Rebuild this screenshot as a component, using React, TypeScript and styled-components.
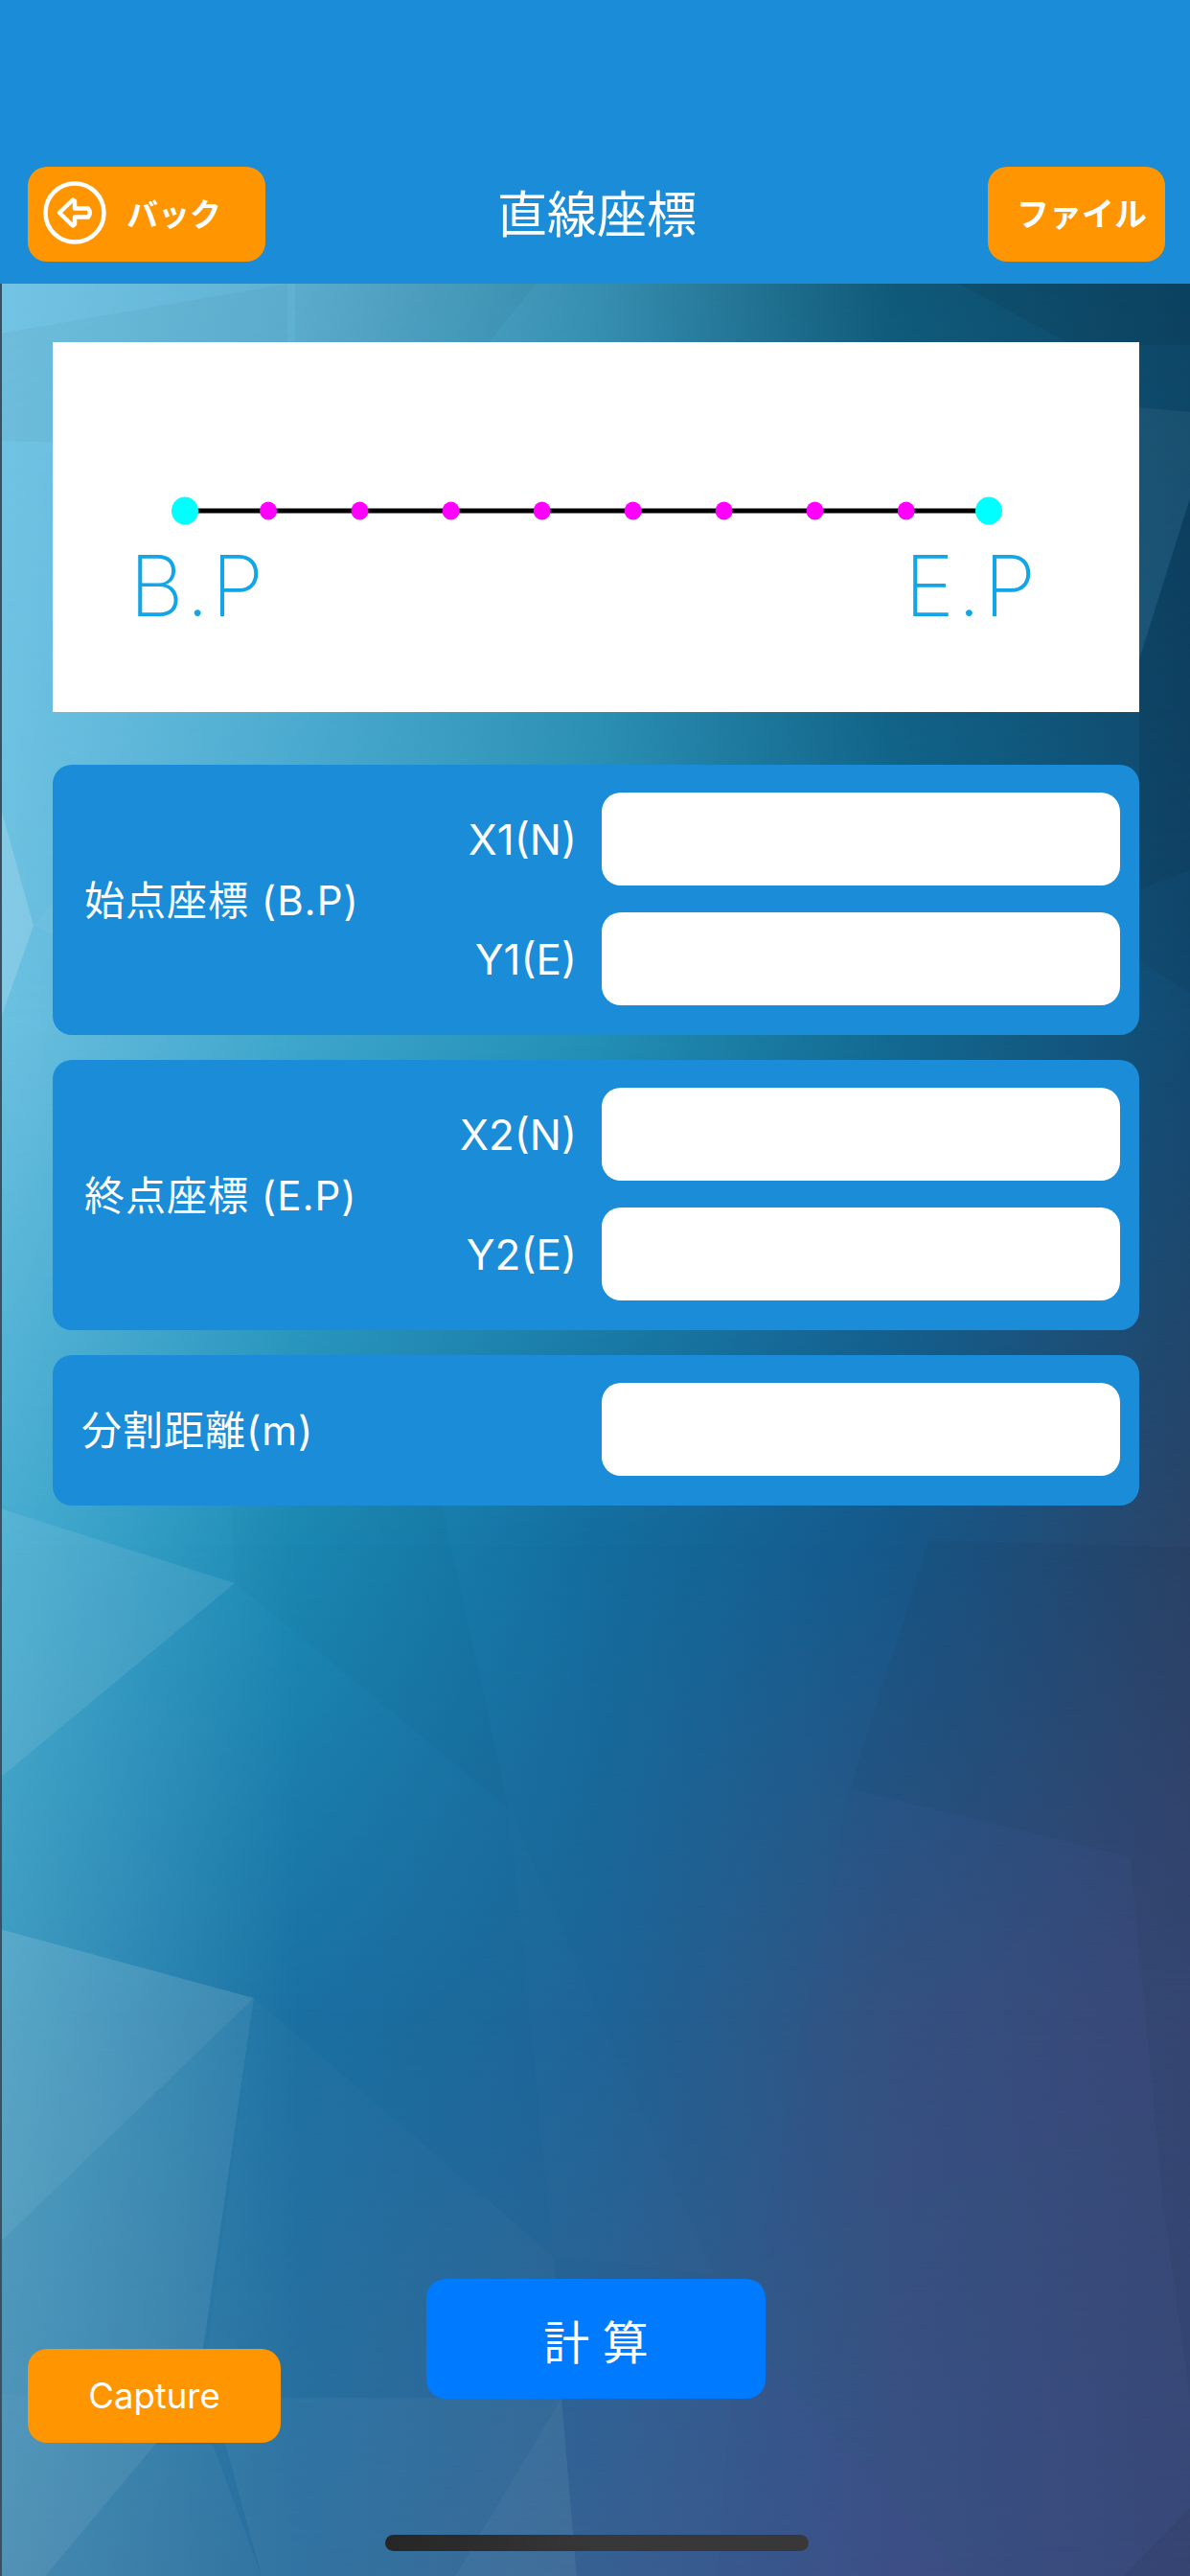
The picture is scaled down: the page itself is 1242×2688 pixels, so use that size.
import React from 'react'
import styled, { createGlobalStyle } from 'styled-components'

const GlobalStyle = createGlobalStyle`
  html, body {
    margin: 0;
    padding: 0;
    background: #1a8cd8;
  }
  * {
    box-sizing: border-box;
  }
`

const FONT = `Inter, 'Noto Sans CJK JP', sans-serif`

const Screen = styled.div`
  position: relative;
  width: 1242px;
  height: 2688px;
  overflow: hidden;
  display: flex;
  flex-direction: column;
  font-family: ${FONT};
  color: #fff;
  &::after {
    content: '';
    position: absolute;
    inset: 0 auto 0 0;
    width: 2px;
    background: #3c4f5e;
  }
`

const Backdrop = styled.svg`
  position: absolute;
  top: 0;
  left: 0;
  z-index: 0;
`

const Header = styled.header`
  position: relative;
  z-index: 1;
  height: 296px;
  flex: none;
  background: #1a8cd8;
  padding: 174px 26px 0 29px;
  display: grid;
  grid-template-columns: 248px 1fr 185px;
  grid-template-rows: 99px;
  align-items: center;
`

const BackButton = styled.button`
  height: 99px;
  border: 0;
  border-radius: 20px;
  background: #ff9500;
  color: #fff;
  font: 700 33px ${FONT};
  display: flex;
  align-items: center;
  gap: 21px;
  padding: 0 0 4px 16px;
`

const FileButton = styled.button`
  height: 99px;
  border: 0;
  border-radius: 20px;
  background: #ff9500;
  color: #fff;
  font: 700 34px ${FONT};
  padding: 0 0 4px 30px;
  text-align: left;
  white-space: nowrap;
`

const Title = styled.h1`
  margin: 0 0 6px 242px;
  font: 400 52px ${FONT};
  white-space: nowrap;
`

const Content = styled.main`
  position: relative;
  z-index: 1;
  flex: 1;
  display: flex;
  flex-direction: column;
  padding: 61px 53px 0 55px;
`

const DiagramCard = styled.div`
  height: 386px;
  background: #fff;
  margin-bottom: 55px;
  svg {
    display: block;
  }
`

const Panels = styled.div`
  display: flex;
  flex-direction: column;
  gap: 26px;
`

const Panel = styled.section<{ $inset: number }>`
  background: #1a8cd8;
  border-radius: 20px;
  padding: 29px 20px 31px ${(p) => p.$inset}px;
  display: flex;
  align-items: center;
`

const PanelTitle = styled.div`
  flex: 1;
  font-size: 42px;
  letter-spacing: 1px;
  white-space: nowrap;
  margin-bottom: 4px;
`

const Fields = styled.div`
  display: flex;
  flex-direction: column;
  gap: 28px;
`

const FieldRow = styled.label`
  display: flex;
  align-items: center;
  justify-content: flex-end;
  gap: 26px;
`

const FieldLabel = styled.span`
  font-size: 44px;
  white-space: nowrap;
`

const FieldInput = styled.input`
  width: 541px;
  height: 97px;
  border: 0;
  border-radius: 20px;
  background: #fff;
  outline: none;
`

const Footer = styled.footer`
  position: relative;
  z-index: 1;
  display: flex;
  flex-direction: column;
  padding-bottom: 26px;
`

const Actions = styled.div`
  display: flex;
  align-items: flex-start;
  gap: 152px;
  padding-left: 29px;
  height: 171px;
`

const CaptureButton = styled.button`
  width: 264px;
  height: 98px;
  margin-top: 73px;
  border: 0;
  border-radius: 20px;
  background: #ff9500;
  color: #fff;
  font: 400 36.5px ${FONT};
`

const CalcButton = styled.button`
  width: 354px;
  height: 125px;
  border: 0;
  border-radius: 20px;
  background: #007aff;
  color: #fff;
  font: 400 48px ${FONT};
`

const HomeBar = styled.div`
  width: 442px;
  height: 17px;
  margin: 96px 0 0 402px;
  border-radius: 9px;
  background: linear-gradient(90deg, #262626 0%, #2e2e2e 25%, #383838 50%, #383838 100%);
`

type Shade = { points: string; fill: string; opacity: number }

const ROWS: { y: number; stops: string[] }[] = [
  { y: 0, stops: ['#76c6e6', '#6cb6d6', '#3f8fae', '#0f5370', '#0b4562'] },
  { y: 0.4, stops: ['#6cc0e0', '#3ea6cc', '#2390b6', '#126a92', '#124a72'] },
  { y: 0.6, stops: ['#46acd0', '#1b8ab5', '#136d9e', '#15588a', '#2b4468'] },
  { y: 0.78, stops: ['#3f9abf', '#1a70a2', '#1d6497', '#33527f', '#384876'] },
  { y: 1, stops: ['#3f86ae', '#276c9c', '#336090', '#3a5084', '#384878'] }
]

const SHADES: Shade[] = [
  // upper field
  { points: '0,348 300,296 300,468 0,460', fill: '#000', opacity: 0.03 },
  { points: '308,296 560,296 394,500 308,420', fill: '#000', opacity: 0.03 },
  { points: '0,840 35,966 0,1065', fill: '#fff', opacity: 0.16 },
  { points: '35,966 170,798 335,798 272,1081', fill: '#fff', opacity: 0.04 },
  { points: '1189,425 1242,430 1242,520 1189,687', fill: '#fff', opacity: 0.05 },
  { points: '1000,296 1242,296 1242,360 1120,360', fill: '#000', opacity: 0.06 },
  { points: '1189,690 1242,520 1242,908 1189,928', fill: '#000', opacity: 0.1 },
  { points: '1189,928 1242,908 1242,1036 1189,1003', fill: '#000', opacity: 0.05 },
  // lower field, left side
  { points: '0,1574 245,1652 0,1855', fill: '#fff', opacity: 0.09 },
  { points: '241,1560 245,1652 531,1887 459,1560', fill: '#000', opacity: 0.02 },
  { points: '0,2013 265,2085 0,2340', fill: '#fff', opacity: 0.13 },
  { points: '0,2340 265,2085 205,2499 0,2499', fill: '#fff', opacity: 0.08 },
  { points: '0,2499 205,2499 162,2551 47,2688 0,2688', fill: '#fff', opacity: 0.1 },
  { points: '162,2551 222,2551 273,2688 47,2688', fill: '#fff', opacity: 0.04 },
  // lower field, centre
  { points: '222,2502 586,2502 475,2688 273,2688', fill: '#fff', opacity: 0.05 },
  { points: '586,2502 602,2688 475,2688', fill: '#fff', opacity: 0.08 },
  { points: '586,2502 764,2502 748,2688 602,2688', fill: '#6a60b0', opacity: 0.08 },
  { points: '764,2502 792,2452 1006,2688 748,2688', fill: '#5a4fa0', opacity: 0.08 },
  { points: '265,2085 578,2355 586,2502 210,2502', fill: '#fff', opacity: 0.02 },
  { points: '531,1887 745,2373 578,2355', fill: '#fff', opacity: 0.012 },
  // lower field, right side
  { points: '970,1607 887,1866 1180,1938 1242,1984 1242,1614', fill: '#000', opacity: 0.03 },
  { points: '887,1866 1180,1938 1200,2200 792,2358', fill: '#5a4fa0', opacity: 0.03 },
  { points: '1180,1938 1242,1984 1242,2502 1214,2300', fill: '#000', opacity: 0.04 },
  { points: '1242,2617 1172,2688 1242,2688', fill: '#000', opacity: 0.05 }
]

const Background: React.FC = () => (
  <Backdrop width="1242" height="2688" viewBox="0 0 1242 2688" aria-hidden>
    <defs>
      {ROWS.map((row, i) => (
        <linearGradient key={i} id={`row-${i}`} x1="0" x2="1" y1="0" y2="0">
          {row.stops.map((color, j) => (
            <stop key={j} offset={j / (row.stops.length - 1)} stopColor={color} />
          ))}
        </linearGradient>
      ))}
      {ROWS.slice(1).map((row, i) => (
        <linearGradient key={i} id={`fade-${i}`} x1="0" x2="0" y1="0" y2="1">
          <stop offset={ROWS[i].y} stopColor="#000" />
          <stop offset={row.y} stopColor="#fff" />
        </linearGradient>
      ))}
      {ROWS.slice(1).map((_, i) => (
        <mask key={i} id={`mask-${i}`} maskUnits="userSpaceOnUse" x="0" y="0" width="1242" height="2688">
          <rect width="1242" height="2688" fill={`url(#fade-${i})`} />
        </mask>
      ))}
    </defs>
    <rect width="1242" height="2688" fill="url(#row-0)" />
    {ROWS.slice(1).map((_, i) => (
      <rect key={i} width="1242" height="2688" fill={`url(#row-${i + 1})`} mask={`url(#mask-${i})`} />
    ))}
    {SHADES.map((shade, i) => (
      <polygon key={i} points={shade.points} fill={shade.fill} fillOpacity={shade.opacity} />
    ))}
  </Backdrop>
)

const BackIcon: React.FC = () => (
  <svg width="66" height="66" viewBox="0 0 66 66" fill="none" stroke="#fff" strokeWidth="4.5" strokeLinejoin="round" strokeLinecap="round">
    <circle cx="33" cy="33" r="30.5" />
    <path d="M17 33 L31 19.5 L33 21 L33 28.5 L47 28.5 Q50.5 33 47 37.5 L33 37.5 L33 45 L31 46.5 Z" />
  </svg>
)

const DOT_X = [225, 320.5, 415.6, 510.7, 605.7, 700.6, 795.5, 890.7]

const Diagram: React.FC = () => (
  <svg width="1134" height="386" viewBox="0 0 1134 386">
    <line x1="138" y1="176" x2="977" y2="176" stroke="#000" strokeWidth="5" />
    {DOT_X.map((x) => (
      <ellipse key={x} cx={x} cy="176" rx="9" ry="9.5" fill="#ff00ff" />
    ))}
    <ellipse cx="138" cy="176" rx="14" ry="14.5" fill="#00ffff" />
    <ellipse cx="977" cy="176" rx="14" ry="14.5" fill="#00ffff" />
    <text x="80" y="286" fontFamily="Inter, sans-serif" fontWeight="200" fontSize="88" fill="#12a5e8" textLength="140">
      B.P
    </text>
    <text x="889" y="286" fontFamily="Inter, sans-serif" fontWeight="200" fontSize="88" fill="#12a5e8" textLength="137">
      E.P
    </text>
  </svg>
)

const App: React.FC = () => {
  return (
    <Screen>
      <GlobalStyle />
      <Background />
      <Header>
        <BackButton>
          <BackIcon />
          バック
        </BackButton>
        <Title>直線座標</Title>
        <FileButton>ファイル</FileButton>
      </Header>
      <Content>
        <DiagramCard>
          <Diagram />
        </DiagramCard>
        <Panels>
          <Panel $inset={33}>
            <PanelTitle>始点座標 (B.P)</PanelTitle>
            <Fields>
              <FieldRow>
                <FieldLabel>X1(N)</FieldLabel>
                <FieldInput />
              </FieldRow>
              <FieldRow>
                <FieldLabel>Y1(E)</FieldLabel>
                <FieldInput />
              </FieldRow>
            </Fields>
          </Panel>
          <Panel $inset={33}>
            <PanelTitle>終点座標 (E.P)</PanelTitle>
            <Fields>
              <FieldRow>
                <FieldLabel>X2(N)</FieldLabel>
                <FieldInput />
              </FieldRow>
              <FieldRow>
                <FieldLabel>Y2(E)</FieldLabel>
                <FieldInput />
              </FieldRow>
            </Fields>
          </Panel>
          <Panel $inset={30}>
            <PanelTitle>分割距離(m)</PanelTitle>
            <Fields>
              <FieldRow>
                <FieldInput />
              </FieldRow>
            </Fields>
          </Panel>
        </Panels>
      </Content>
      <Footer>
        <Actions>
          <CaptureButton>Capture</CaptureButton>
          <CalcButton>計 算</CalcButton>
        </Actions>
        <HomeBar />
      </Footer>
    </Screen>
  )
}

export default App
